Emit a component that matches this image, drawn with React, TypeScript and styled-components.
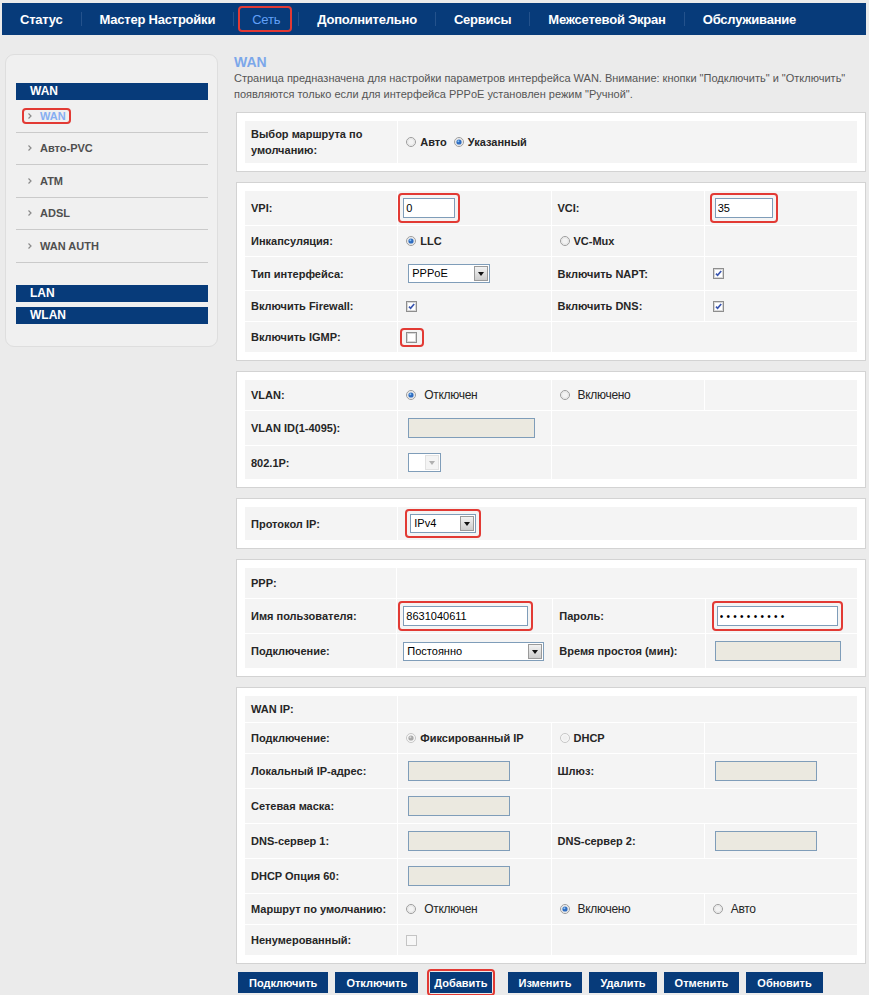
import React from 'react';
import styled, { createGlobalStyle, css } from 'styled-components';

const NAVY = '#073b7a';
const RED = '#e23a34';

const GlobalStyle = createGlobalStyle`
  body {
    margin: 0;
    background: #ebebeb;
    font-family: "Liberation Sans", Arial, sans-serif;
    color: #262626;
  }
`;

const Page = styled.div`
  padding: 3px 3px 4px 2px;
`;

const NavBar = styled.nav`
  display: flex;
  align-items: center;
  height: 32px;
  background: ${NAVY};
`;

const NavItem = styled.div<{ $active?: boolean; $marked?: boolean }>`
  position: relative;
  display: flex;
  align-items: center;
  height: 32px;
  padding: 0 18px;
  font-size: 13px;
  letter-spacing: -0.22px;
  font-weight: ${p => (p.$active ? 400 : 700)};
  color: ${p => (p.$active ? '#62a0f8' : '#fff')};
  ${p =>
    p.$marked &&
    css`
      &::after {
        content: '';
        position: absolute;
        top: 3px;
        bottom: 3px;
        left: 4px;
        right: 6px;
        border: 2px solid ${RED};
        border-radius: 4px;
      }
    `}
`;

const NavSep = styled.span`
  width: 1px;
  height: 14px;
  background: #24528c;
`;

const Body = styled.div`
  display: flex;
  align-items: flex-start;
  padding-top: 19px;
`;

const Sidebar = styled.aside`
  box-sizing: border-box;
  width: 213px;
  margin-left: 3px;
  padding: 28px 9px 22px 10px;
  background: #f0f0f0;
  border: 1px solid #dedede;
  border-radius: 9px;
`;

const MenuHeader = styled.div<{ $space?: number }>`
  height: 17px;
  line-height: 17px;
  margin-top: ${p => p.$space ?? 0}px;
  padding-left: 14px;
  background: ${NAVY};
  color: #fff;
  font-size: 12px;
  font-weight: 700;
`;

const MenuItem = styled.div<{ $active?: boolean }>`
  display: flex;
  align-items: center;
  height: 31.5px;
  padding-left: 12px;
  border-bottom: 1px solid #cacaca;
  font-size: 11px;
  font-weight: 700;
  color: ${p => (p.$active ? '#86aef2' : '#4f4f4f')};
  svg {
    margin-right: 8px;
  }
`;

const Main = styled.main`
  flex: 1;
  margin-left: 16px;
`;

const Title = styled.h1`
  margin: 0;
  font-size: 14px;
  line-height: 16px;
  font-weight: 700;
  color: #7ba7ea;
`;

const Desc = styled.p`
  margin: 0 0 10px;
  font-size: 11px;
  line-height: 16px;
  color: #555;
`;

const Section = styled.section`
  margin: 0 0 10px 2px;
  padding: 8px;
  background: #fff;
  border: 1px solid #d3d3d3;
`;

const Grid = styled.div`
  display: grid;
  grid-template-columns: repeat(4, 1fr);
  gap: 1px;
`;

const Cell = styled.div<{ $span?: number; $label?: boolean; $short?: boolean }>`
  grid-column: span ${p => p.$span ?? 1};
  display: flex;
  align-items: center;
  box-sizing: border-box;
  min-height: ${p => (p.$short ? 26 : 30)}px;
  padding: 5px ${p => (p.$label ? 6 : 8)}px;
  background: #f4f4f4;
  font-size: 11px;
  line-height: 16px;
  font-weight: ${p => (p.$label ? 700 : 400)};
`;

const Mark = styled.span<{ $ml?: number; $pad?: string; $gap?: number }>`
  display: inline-flex;
  align-items: center;
  gap: ${p => p.$gap ?? 0}px;
  margin: -3px 0 -3px ${p => p.$ml ?? 0}px;
  padding: ${p => p.$pad ?? '3px'};
  border: 2px solid ${RED};
  border-radius: 4px;
  & > * {
    margin: 0 !important;
  }
`;

const TextInput = styled.input<{ $w: number; $ml?: number }>`
  box-sizing: border-box;
  width: ${p => p.$w}px;
  height: 20px;
  margin: 2px 0 2px ${p => p.$ml ?? 2}px;
  padding: 0 2px;
  border: 1px solid #7f9db9;
  background: ${p => (p.disabled ? '#ebe9e0' : '#fff')};
  font-family: "Liberation Sans", Arial, sans-serif;
  font-size: 11px;
  color: #000;
  outline: none;
`;

const SecretInput = styled(TextInput)`
  letter-spacing: 3.3px;
  font-size: 10px;
`;

const SelectBox = styled.div<{ $w: number; $ml?: number }>`
  display: inline-flex;
  box-sizing: border-box;
  width: ${p => p.$w}px;
  height: 19px;
  margin: 2px 0 2px ${p => p.$ml ?? 2}px;
  border: 1px solid #7f9db9;
  background: #fff;
`;

const SelectValue = styled.span`
  flex: 1;
  padding-left: 3px;
  font-size: 11px;
  line-height: 17px;
  color: #000;
`;

const SelectArrow = styled.span<{ $disabled?: boolean }>`
  display: flex;
  align-items: center;
  justify-content: center;
  width: 14px;
  margin: 1px;
  box-sizing: border-box;
  border: 1px solid ${p => (p.$disabled ? '#e2e2e2' : '#9a9a9a')};
  background: ${p => (p.$disabled ? '#f4f4f4' : 'linear-gradient(#f2f2f2, #cdcdcd)')};
  &::before {
    content: '';
    border-left: 3.5px solid transparent;
    border-right: 3.5px solid transparent;
    border-top: 4px solid ${p => (p.$disabled ? '#b0b0b0' : '#111')};
    margin-top: 1px;
  }
`;

const Choice = styled.span<{ $plain?: boolean; $gap?: number }>`
  display: inline-flex;
  align-items: center;
  margin-right: 7px;
  font-weight: ${p => (p.$plain ? 400 : 700)};
  font-size: ${p => (p.$plain ? 12 : 11)}px;
  letter-spacing: ${p => (p.$plain ? -0.3 : 0)}px;
  svg {
    margin-right: ${p => p.$gap ?? 4}px;
  }
`;

const ButtonRow = styled.div`
  display: flex;
  align-items: center;
  gap: 7px;
  margin-top: -2px;
  padding-left: 4px;
`;

const Button = styled.button<{ $tight?: boolean }>`
  height: 21px;
  padding: 0 ${p => (p.$tight ? 4 : 11)}px;
  border: none;
  background: ${NAVY};
  color: #fff;
  font-family: "Liberation Sans", Arial, sans-serif;
  font-size: 11px;
  font-weight: 700;
`;

const MarkedButton = styled(Mark)`
  margin: -3px 6px -3px 2px;
  padding: 1px;
`;

function Arrow() {
  return (
    <svg width="4" height="6" viewBox="0 0 4 6">
      <path d="M0.5 0.5 L3 3 L0.5 5.5" stroke="#8a8a8a" strokeWidth="1.2" fill="none" />
    </svg>
  );
}

function Radio({ checked, disabled }: { checked?: boolean; disabled?: boolean }) {
  return (
    <svg width="10" height="10" viewBox="0 0 10 10">
      <circle cx="5" cy="5" r="4.5" fill={disabled ? '#f0f0f0' : '#f3f3f3'} stroke={disabled ? '#c6c6c6' : '#9c9c9c'} />
      <circle cx="5" cy="5" r="3.4" fill="none" stroke={disabled ? '#f8f8f8' : '#e2e2e2'} />
      {checked && (
        <>
          <circle cx="5" cy="5" r="2.6" fill={disabled ? '#a8a8a8' : '#2e6cc0'} />
          <circle cx="4.4" cy="4.3" r="1" fill={disabled ? '#d8d8d8' : '#8cc4f2'} />
        </>
      )}
    </svg>
  );
}

function Check({ checked, disabled }: { checked?: boolean; disabled?: boolean }) {
  return (
    <svg width="11" height="11" viewBox="0 0 11 11">
      <rect x="0.5" y="0.5" width="10" height="10" fill={disabled ? '#f7f7f7' : '#fff'} stroke={disabled ? '#c4c4c4' : '#8e8e8e'} />
      {!disabled && <rect x="1.5" y="1.5" width="8" height="8" fill="none" stroke="#d8d8d8" />}
      {checked && <path d="M3 5.6 L4.6 7.3 L8.2 3" stroke="#3a56b0" strokeWidth="1.7" fill="none" />}
    </svg>
  );
}

function Select({ w, value, disabled, ml }: { w: number; value?: string; disabled?: boolean; ml?: number }) {
  return (
    <SelectBox $w={w} $ml={ml}>
      <SelectValue>{value}</SelectValue>
      <SelectArrow $disabled={disabled} />
    </SelectBox>
  );
}

const navItems = ['Статус', 'Мастер Настройки', 'Сеть', 'Дополнительно', 'Сервисы', 'Межсетевой Экран', 'Обслуживание'];
const menuItems = ['Авто-PVC', 'ATM', 'ADSL', 'WAN AUTH'];
const buttons = ['Подключить', 'Отключить', 'Добавить', 'Изменить', 'Удалить', 'Отменить', 'Обновить'];

export default function App() {
  return (
    <Page>
      <GlobalStyle />
      <NavBar>
        {navItems.map((name, i) => (
          <React.Fragment key={name}>
            {i > 0 && <NavSep />}
            <NavItem $active={name === 'Сеть'} $marked={name === 'Сеть'}>
              {name}
            </NavItem>
          </React.Fragment>
        ))}
      </NavBar>

      <Body>
        <Sidebar>
          <MenuHeader>WAN</MenuHeader>
          <MenuItem $active>
            <Mark $ml={-6} $pad="0 3px 0 4px" $gap={8}>
              <Arrow />
              <span>WAN</span>
            </Mark>
          </MenuItem>
          {menuItems.map(item => (
            <MenuItem key={item}>
              <Arrow />
              {item}
            </MenuItem>
          ))}
          <MenuHeader $space={22}>LAN</MenuHeader>
          <MenuHeader $space={5}>WLAN</MenuHeader>
        </Sidebar>

        <Main>
          <Title>WAN</Title>
          <Desc>
            Страница предназначена для настройки параметров интерфейса WAN. Внимание: кнопки "Подключить" и "Отключить"
            появляются только если для интерфейса PPPoE установлен режим "Ручной".
          </Desc>

          <Section>
            <Grid>
              <Cell $label>Выбор маршрута по умолчанию:</Cell>
              <Cell $span={3}>
                <Choice><Radio />Авто</Choice>
                <Choice><Radio checked />Указанный</Choice>
              </Cell>
            </Grid>
          </Section>

          <Section>
            <Grid>
              <Cell $label>VPI:</Cell>
              <Cell>
                <Mark $ml={-8}>
                  <TextInput $w={52} value="0" readOnly />
                </Mark>
              </Cell>
              <Cell $label>VCI:</Cell>
              <Cell>
                <Mark $ml={-3}>
                  <TextInput $w={58} value="35" readOnly />
                </Mark>
              </Cell>

              <Cell $label>Инкапсуляция:</Cell>
              <Cell><Choice><Radio checked />LLC</Choice></Cell>
              <Cell><Choice><Radio />VC-Mux</Choice></Cell>
              <Cell />

              <Cell $label>Тип интерфейса:</Cell>
              <Cell><Select w={82} value="PPPoE" /></Cell>
              <Cell $label>Включить NAPT:</Cell>
              <Cell><Check checked /></Cell>

              <Cell $label>Включить Firewall:</Cell>
              <Cell><Check checked /></Cell>
              <Cell $label>Включить DNS:</Cell>
              <Cell><Check checked /></Cell>

              <Cell $label>Включить IGMP:</Cell>
              <Cell>
                <Mark $ml={-6} $pad="2px 5px 2px 4px">
                  <Check />
                </Mark>
              </Cell>
              <Cell $span={2} />
            </Grid>
          </Section>

          <Section>
            <Grid>
              <Cell $label>VLAN:</Cell>
              <Cell><Choice $plain $gap={8}><Radio checked />Отключен</Choice></Cell>
              <Cell><Choice $plain $gap={8}><Radio />Включено</Choice></Cell>
              <Cell />

              <Cell $label>VLAN ID(1-4095):</Cell>
              <Cell><TextInput $w={127} disabled value="" readOnly /></Cell>
              <Cell $span={2} />

              <Cell $label>802.1P:</Cell>
              <Cell><Select w={33} disabled /></Cell>
              <Cell $span={2} />
            </Grid>
          </Section>

          <Section>
            <Grid>
              <Cell $label>Протокол IP:</Cell>
              <Cell $span={3}>
                <Mark $ml={-1}>
                  <Select w={66} value="IPv4" />
                </Mark>
              </Cell>
            </Grid>
          </Section>

          <Section>
            <Grid>
              <Cell $label>PPP:</Cell>
              <Cell $span={3} />

              <Cell $label>Имя пользователя:</Cell>
              <Cell>
                <Mark $ml={-7}>
                  <TextInput $w={125} value="8631040611" readOnly />
                </Mark>
              </Cell>
              <Cell $label>Пароль:</Cell>
              <Cell>
                <Mark $ml={-2}>
                  <SecretInput $w={121} value="••••••••••" readOnly />
                </Mark>
              </Cell>

              <Cell $label>Подключение:</Cell>
              <Cell><Select w={141} value="Постоянно" ml={-2} /></Cell>
              <Cell $label>Время простоя (мин):</Cell>
              <Cell><TextInput $w={126} $ml={1} disabled value="" readOnly /></Cell>
            </Grid>
          </Section>

          <Section>
            <Grid>
              <Cell $label $short>WAN IP:</Cell>
              <Cell $span={3} $short />

              <Cell $label>Подключение:</Cell>
              <Cell><Choice><Radio checked disabled />Фиксированный IP</Choice></Cell>
              <Cell><Choice><Radio disabled />DHCP</Choice></Cell>
              <Cell />

              <Cell $label>Локальный IP-адрес:</Cell>
              <Cell><TextInput $w={102} disabled value="" readOnly /></Cell>
              <Cell $label>Шлюз:</Cell>
              <Cell><TextInput $w={102} disabled value="" readOnly /></Cell>

              <Cell $label>Сетевая маска:</Cell>
              <Cell><TextInput $w={102} disabled value="" readOnly /></Cell>
              <Cell $span={2} />

              <Cell $label>DNS-сервер 1:</Cell>
              <Cell><TextInput $w={102} disabled value="" readOnly /></Cell>
              <Cell $label>DNS-сервер 2:</Cell>
              <Cell><TextInput $w={102} disabled value="" readOnly /></Cell>

              <Cell $label>DHCP Опция 60:</Cell>
              <Cell><TextInput $w={102} disabled value="" readOnly /></Cell>
              <Cell $span={2} />

              <Cell $label>Маршрут по умолчанию:</Cell>
              <Cell><Choice $plain $gap={8}><Radio />Отключен</Choice></Cell>
              <Cell><Choice $plain $gap={8}><Radio checked />Включено</Choice></Cell>
              <Cell><Choice $plain $gap={8}><Radio />Авто</Choice></Cell>

              <Cell $label>Ненумерованный:</Cell>
              <Cell><Check disabled /></Cell>
              <Cell $span={2} />
            </Grid>
          </Section>

          <ButtonRow>
            {buttons.map(b =>
              b === 'Добавить' ? (
                <MarkedButton key={b}>
                  <Button $tight>{b}</Button>
                </MarkedButton>
              ) : (
                <Button key={b}>{b}</Button>
              )
            )}
          </ButtonRow>
        </Main>
      </Body>
    </Page>
  );
}
